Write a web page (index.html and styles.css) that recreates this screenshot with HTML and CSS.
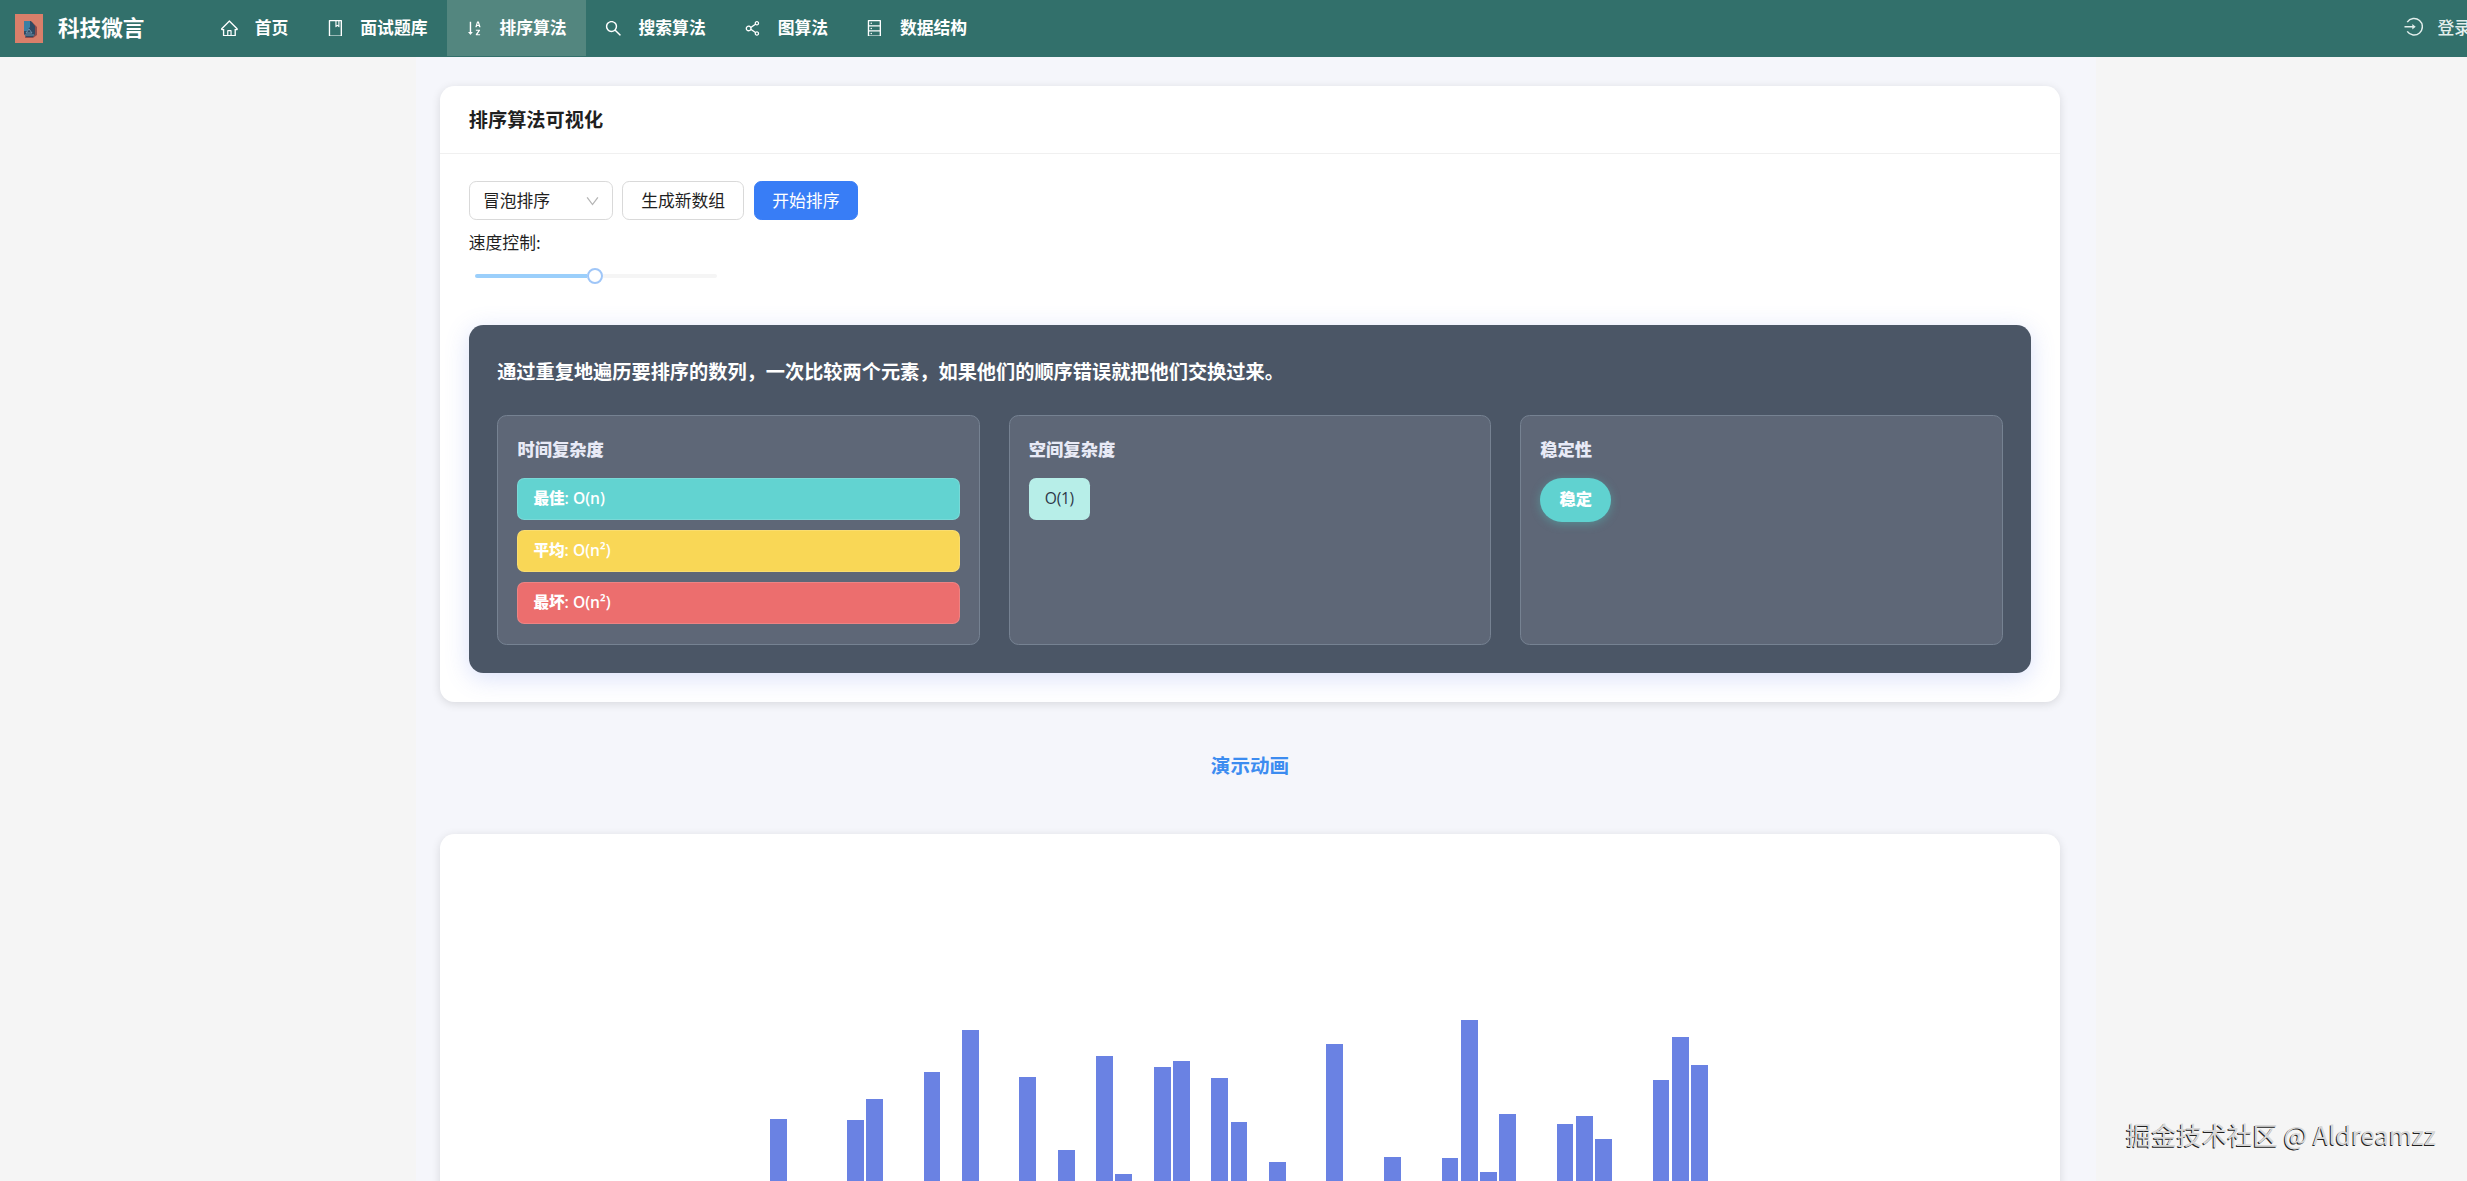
FILE: index.html
```html
<!DOCTYPE html>
<html lang="zh-CN">
<head>
  <meta charset="UTF-8">
  <meta name="viewport" content="width=device-width, initial-scale=1.0">
  <title>排序算法可视化 - 科技微言</title>
  <link rel="stylesheet" href="styles.css">
</head>
<body>

  <header class="header">
    <div class="logo">
      <svg class="logo-img" viewBox="0 0 28 29">
        <rect width="28" height="29" fill="#d97f6a"/>
        <path d="M14 8h3l5 5v8l-4 3h-8z" fill="#8d4c4c"/>
        <path d="M9 7h7l4 5v8l-2 3H11l-2-3z" fill="#2f4a63"/>
        <path d="M9 7h6v6l-3 4H9z" fill="#3c7fa3"/>
        <path d="M11 19l3-4 3 4zM10 21h9" fill="none" stroke="#6f93ae" stroke-width="1"/>
      </svg>
      <span>科技微言</span>
    </div>
    <nav class="menu">
      <a class="menu-item">
        <svg class="icon" viewBox="64 64 896 896"><path d="M946.5 505L560.1 118.8l-25.9-25.9a31.5 31.5 0 0 0-44.4 0L77.5 505a63.9 63.9 0 0 0-18.8 46c.4 35.2 29.7 63.3 64.9 63.3h42.5V940h691.8V614.3h43.4c17.1 0 33.2-6.7 45.3-18.8a63.6 63.6 0 0 0 18.7-45.3c0-17-6.7-33.1-18.8-45.2zM568 868H456V664h112v204zm217.9-325.7V868H632V640c0-22.1-17.9-40-40-40H432c-22.1 0-40 17.9-40 40v228H238.1V542.3h-96l370-369.7 23.1 23.1L882 542.3h-96.1z"/></svg>
        <span>首页</span>
      </a>
      <a class="menu-item">
        <svg class="icon" viewBox="64 64 896 896"><path d="M832 64H192c-17.700 0-32 14.300-32 32v832c0 17.700 14.300 32 32 32h640c17.700 0 32-14.300 32-32V96c0-17.700-14.300-32-32-32zm-260 72h96v209.900L621.500 312 572 347.400V136zm220 752H232V136h280v296.900c0 3.300 1 6.600 3 9.300a15.900 15.900 0 0 0 22.300 3.700l83.800-59.900 81.400 59.400c2.700 2 6 3.100 9.400 3.100 8.800 0 16-7.200 16-16V136h64v752z"/></svg>
        <span>面试题库</span>
      </a>
      <a class="menu-item active">
        <svg class="icon" viewBox="64 64 896 896"><path d="M839.600 433.800L749 150.500a9.240 9.240 0 0 0-8.900-6.500h-77.400c-4.100 0-7.600 2.600-8.900 6.500l-91.300 283.300c-.3.900-.5 1.900-.5 2.900 0 5.100 4.200 9.300 9.300 9.300h56.400c4.200 0 7.800-2.800 9-6.800l17.500-61.600h89l17.300 61.500c1.100 4 4.800 6.800 9 6.800h61.200c1 0 1.900-.1 2.800-.4 2.400-.8 4.300-2.400 5.500-4.600 1.100-2.200 1.300-4.700.6-7.100zM663.300 325.500l32.800-116.900h6.300l32.100 116.900h-71.200zm143.500 492.900H677.200v-.4l132.600-188.900c1.100-1.600 1.700-3.400 1.700-5.400v-36.400c0-5.100-4.200-9.300-9.300-9.300h-204c-5.100 0-9.300 4.200-9.300 9.300v43c0 5.100 4.200 9.300 9.300 9.300h122.600v.4L587.700 828.900a9.350 9.350 0 0 0-1.700 5.400v36.400c0 5.100 4.200 9.300 9.300 9.300h211.400c5.100 0 9.300-4.200 9.300-9.300v-43a9.200 9.200 0 0 0-9.200-9.300zM416 702h-76V172c0-4.400-3.600-8-8-8h-60c-4.400 0-8 3.600-8 8v530h-76c-6.700 0-10.500 7.800-6.300 13l112 141.900a8 8 0 0 0 12.600 0l112-141.900c4.100-5.200.4-13-6.300-13z"/></svg>
        <span>排序算法</span>
      </a>
      <a class="menu-item">
        <svg class="icon" viewBox="64 64 896 896"><path d="M909.600 854.500L649.900 594.800C690.200 542.700 712 479 712 412c0-80.200-31.300-155.400-87.900-212.100-56.600-56.700-132-87.900-212.100-87.900s-155.500 31.300-212.100 87.900C143.200 256.500 112 331.800 112 412c0 80.100 31.300 155.500 87.900 212.100C256.500 680.800 331.800 712 412 712c67 0 130.600-21.800 182.700-62l259.700 259.600a8.200 8.200 0 0 0 11.600 0l43.600-43.500a8.200 8.200 0 0 0 0-11.600zM570.400 570.400C528 612.700 471.800 636 412 636s-116-23.300-158.400-65.600C211.300 528 188 471.800 188 412s23.300-116.100 65.600-158.400C296 211.300 352.200 188 412 188s116.100 23.200 158.400 65.600S636 352.200 636 412s-23.300 116.100-65.600 158.400z"/></svg>
        <span>搜索算法</span>
      </a>
      <a class="menu-item">
        <svg class="icon" viewBox="64 64 896 896"><path d="M752 664c-28.500 0-54.800 10-75.400 26.700L469.400 540.800a160.680 160.680 0 0 0 0-57.600l207.200-149.900C697.200 350 723.500 360 752 360c66.200 0 120-53.800 120-120s-53.800-120-120-120-120 53.800-120 120c0 11.600 1.600 22.700 4.700 33.300L439.900 415.800C410.700 377.100 364.300 352 312 352c-88.400 0-160 71.600-160 160s71.600 160 160 160c52.300 0 98.700-25.100 127.900-63.800l196.800 142.500c-3.100 10.600-4.700 21.800-4.700 33.300 0 66.200 53.800 120 120 120s120-53.800 120-120-53.800-120-120-120zm0-476c28.700 0 52 23.300 52 52s-23.300 52-52 52-52-23.300-52-52 23.300-52 52-52zM312 600c-48.500 0-88-39.500-88-88s39.500-88 88-88 88 39.500 88 88-39.500 88-88 88zm440 236c-28.700 0-52-23.300-52-52s23.300-52 52-52 52 23.300 52 52-23.300 52-52 52z"/></svg>
        <span>图算法</span>
      </a>
      <a class="menu-item">
        <svg class="icon" viewBox="64 64 896 896"><path d="M832 64H192c-17.700 0-32 14.300-32 32v832c0 17.700 14.300 32 32 32h640c17.700 0 32-14.300 32-32V96c0-17.700-14.300-32-32-32zm-600 72h560v208H232V136zm560 480H232V408h560v208zm0 272H232V680h560v208zM304 240a40 40 0 1 0 80 0 40 40 0 1 0-80 0zm0 272a40 40 0 1 0 80 0 40 40 0 1 0-80 0zm0 272a40 40 0 1 0 80 0 40 40 0 1 0-80 0z"/></svg>
        <span>数据结构</span>
      </a>
    </nav>
    <a class="login">
      <svg class="login-icon" viewBox="0 0 20 20"><path d="M3.300 5.200A8.500 8.500 0 1 1 3.300 14.800M.5 10H10" fill="none" stroke="currentColor" stroke-width="1.500"/><path d="M8.500 7.300L12 10l-3.500 2.700z" fill="currentColor"/></svg>
      <span>登录</span>
    </a>
  </header>

  <main class="content">
    <section class="card">
      <h3 class="card-head">排序算法可视化</h3>
      <div class="card-body">
        <div class="controls">
          <div class="select">
            <span>冒泡排序</span>
            <svg class="arrow" viewBox="0 0 14 10"><path d="M1.200 1L7 8.800 12.800 1" fill="none" stroke="currentColor" stroke-width="1.400"/></svg>
          </div>
          <button class="btn">生成新数组</button>
          <button class="btn btn-primary">开始排序</button>
        </div>
        <div class="speed">速度控制:</div>
        <div class="slider">
          <div class="slider-track"></div>
          <div class="slider-handle"></div>
          <div class="slider-rest"></div>
        </div>

        <div class="info">
          <p class="info-desc">通过重复地遍历要排序的数列，一次比较两个元素，如果他们的顺序错误就把他们交换过来。</p>
          <div class="info-grid">
            <div class="info-item">
              <h4>时间复杂度</h4>
              <div class="rows">
                <div class="row best"><strong>最佳</strong>: O(n)</div>
                <div class="row average"><strong>平均</strong>: O(n²)</div>
                <div class="row worst"><strong>最坏</strong>: O(n²)</div>
              </div>
            </div>
            <div class="info-item">
              <h4>空间复杂度</h4>
              <span class="space">O(1)</span>
            </div>
            <div class="info-item">
              <h4>稳定性</h4>
              <span class="stable">稳定</span>
            </div>
          </div>
        </div>
      </div>
    </section>

    <h2 class="demo-title">演示动画</h2>

    <section class="card chart-card">
      <div class="chart" id="chart"></div>
    </section>
  </main>

  <div class="watermark">掘金技术社区 @ Aldreamzz</div>

  <script>
    const chart = document.getElementById('chart');

    const data = [
      315, 120, 64, 210, 314, 335, 90, 180, 362, 48,
      404, 150, 230, 357, 75, 284, 200, 378, 260, 110,
      367, 373, 36, 356, 312, 160, 272, 95, 240, 390,
      130, 54, 277, 220, 84, 276, 414, 262, 320, 170,
      60, 310, 318, 295, 140, 225, 354, 397, 369, 100
    ];

    data.forEach(value => {
      const bar = document.createElement('div');
      bar.className = 'bar';
      bar.style.height = value + 'px';
      chart.appendChild(bar);
    });
  </script>

</body>
</html>
```
FILE: styles.css
```css
:root {
  --header-bg: #32706b;
  --page-bg: #f5f5f5;
  --content-bg: #f5f6fb;
  --text-color: #1f1f1f;
  --primary: #387df6;
  --border-color: #d9d9d9;
}

* {
  margin: 0;
  padding: 0;
  box-sizing: border-box;
}

html {
  overflow: hidden;
}

body {
  width: 2512px;
  height: 1181px;
  overflow: hidden;
  background: var(--page-bg);
  color: var(--text-color);
  font-family: 'Noto Sans CJK SC', 'Noto Sans', sans-serif;
  font-size: 16.8px;
  line-height: 26.4px;
}

.header {
  display: flex;
  align-items: center;
  height: 57px;
  padding-left: 15px;
  background: var(--header-bg);
  color: #fff;
}

.header span {
  padding-bottom: 2px;
}

.logo {
  display: flex;
  align-items: center;
  width: 187px;
  font-size: 21.6px;
  font-weight: 700;
}

.logo-img {
  width: 28px;
  height: 29px;
  margin-right: 15px;
}

.menu {
  display: flex;
  height: 100%;
}

.menu-item {
  display: flex;
  align-items: center;
  gap: 16.8px;
  height: 56px;
  padding: 0 19.2px;
  font-weight: 700;
}

.menu-item.active {
  background: #53867f;
}

.icon {
  width: 16.8px;
  height: 16.8px;
  fill: currentColor;
}

.login {
  display: flex;
  align-items: center;
  gap: 14px;
  margin-left: auto;
  margin-right: 41px;
  color: #e3eeec;
  font-weight: 500;
}

.login-icon {
  width: 19.5px;
  height: 19.5px;
  margin-top: -3px;
}

.content {
  width: 1680px;
  margin-left: 416px;
  padding: 29px 36px 0 24px;
  background: var(--content-bg);
}

.card {
  background: #fff;
  border-radius: 14.4px;
  box-shadow: 0 2px 10px rgba(0, 0, 0, 0.12);
}

.card-head {
  height: 67.5px;
  padding: 0 28.8px;
  border-bottom: 1px solid #f0f0f0;
  font-size: 19.2px;
  line-height: 67px;
}

.card-body {
  padding: 27.5px 28.8px 28.8px;
}

.controls {
  display: flex;
  gap: 9.6px;
}

.select {
  display: flex;
  align-items: center;
  justify-content: space-between;
  width: 144px;
  height: 39px;
  padding: 0 13px 0 13.2px;
  border: 1px solid var(--border-color);
  border-radius: 7.2px;
}

.arrow {
  width: 13px;
  height: 10px;
  color: #b5b5b5;
}

.btn {
  height: 39px;
  padding: 0 17.8px 1px;
  background: #fff;
  border: 1px solid var(--border-color);
  border-radius: 7.2px;
  color: var(--text-color);
  font-family: inherit;
  font-size: 16.8px;
}

.btn-primary {
  background: var(--primary);
  border-color: var(--primary);
  color: #fff;
}

.speed {
  margin-top: 9px;
}

.slider {
  display: flex;
  align-items: center;
  width: 242px;
  height: 16px;
  margin: 12.5px 0 0 6px;
}

.slider-track {
  width: 112px;
  height: 4.8px;
  background: #9bcffb;
  border-radius: 2px 0 0 2px;
}

.slider-handle {
  width: 16.5px;
  height: 16.5px;
  background: #fff;
  border: 2.4px solid #9fc6f8;
  border-radius: 50%;
}

.slider-rest {
  flex: 1;
  height: 4.8px;
  background: #f5f5f5;
  border-radius: 0 2px 2px 0;
}

.info {
  height: 348px;
  margin-top: 41px;
  padding: 28.8px 28.4px;
  background: #4b5666;
  border-radius: 14.4px;
  box-shadow: 0 5px 24px rgba(102, 126, 234, 0.24);
}

.info-desc {
  margin-bottom: 27.6px;
  color: #fff;
  font-size: 19.2px;
  font-weight: 600;
  line-height: 34px;
}

.info-grid {
  display: grid;
  grid-template-columns: repeat(3, 1fr);
  gap: 28.8px;
  height: 228.5px;
}

.info-item {
  padding: 20.2px 19.2px;
  background: #5e6777;
  border: 1px solid #768292;
  border-radius: 9.6px;
}

.info-item h4 {
  margin-bottom: 15.3px;
  color: #e8eaf6;
  font-size: 17.28px;
  font-weight: 900;
  line-height: 26px;
}

.rows {
  display: flex;
  flex-direction: column;
  gap: 10px;
}

.row {
  height: 42px;
  padding: 0 15px;
  border: 1px solid rgba(255, 255, 255, 0.15);
  border-radius: 7.2px;
  color: #fff;
  font-family: 'Open Sans', 'Noto Sans CJK SC', sans-serif;
  font-size: 15.6px;
  font-weight: 600;
  line-height: 38px;
}

.row strong {
  font-weight: 900;
}

.best {
  background: #62d3d1;
}

.average {
  background: #f9d756;
}

.worst {
  background: #ec6e6e;
}

.space {
  display: inline-block;
  height: 42px;
  padding: 0 16px;
  background: #b7eee8;
  border-radius: 7.2px;
  color: #2d3748;
  font-family: 'Open Sans', sans-serif;
  font-size: 15.6px;
  letter-spacing: -0.3px;
  line-height: 41px;
}

.stable {
  display: inline-block;
  height: 44px;
  padding: 0 19.2px;
  background: #60d2d0;
  border-radius: 24px;
  box-shadow: 0 2px 10px rgba(78, 205, 196, 0.4);
  color: #fff;
  font-size: 16.3px;
  font-weight: 900;
  line-height: 41px;
}

.demo-title {
  height: 132px;
  color: #3c8cf0;
  font-size: 19.6px;
  font-weight: 700;
  line-height: 126px;
  text-align: center;
}

.chart-card {
  height: 620px;
}

.chart {
  display: flex;
  align-items: flex-end;
  justify-content: center;
  gap: 2.4px;
  height: 600px;
  margin-right: 3px;
}

.bar {
  width: 16.8px;
  background: #6a82e3;
}

/* sits over the bottom right corner of the page */
.watermark {
  position: absolute;
  top: 1115px;
  left: 2126px;
  color: #d8d8d8;
  font-size: 25.3px;
  line-height: 38px;
  text-shadow: -1px 1px 0 #222;
  white-space: nowrap;
}
```
